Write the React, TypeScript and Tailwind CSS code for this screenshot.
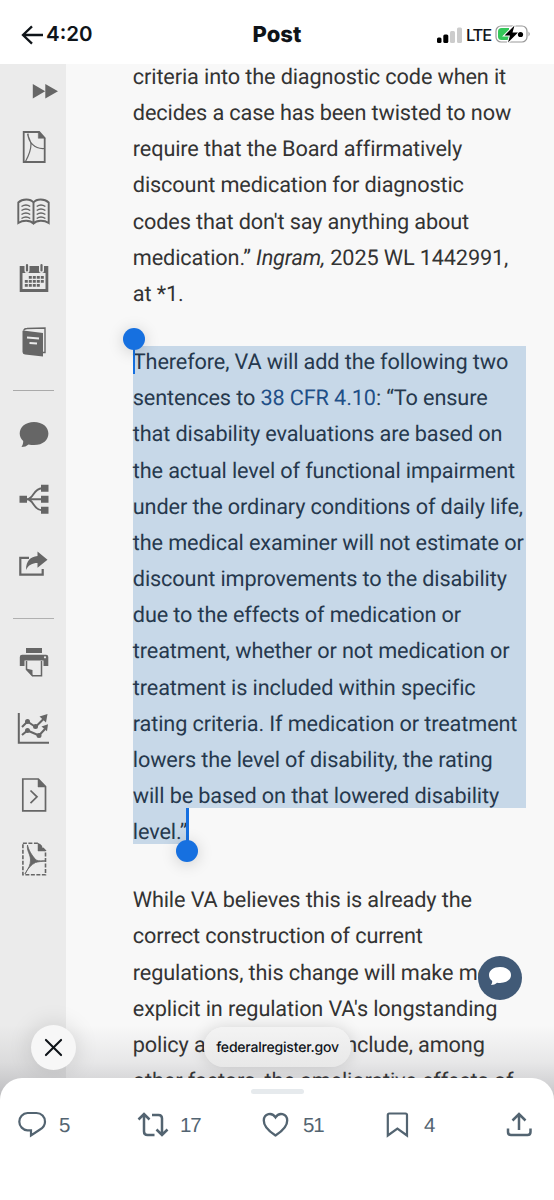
import type { ReactNode } from "react";

const introLines: ReactNode[] = [
  "criteria into the diagnostic code when it",
  "decides a case has been twisted to now",
  "require that the Board affirmatively",
  "discount medication for diagnostic",
  "codes that don't say anything about",
  <>
    medication.” <em>Ingram,</em> 2025 WL 1442991,
  </>,
  "at *1.",
];

const selectedLines: ReactNode[] = [
  "Therefore, VA will add the following two",
  <>
    sentences to <a className="text-[#1f4f87]">38 CFR 4.10</a>: “To ensure
  </>,
  "that disability evaluations are based on",
  "the actual level of functional impairment",
  "under the ordinary conditions of daily life,",
  "the medical examiner will not estimate or",
  "discount improvements to the disability",
  "due to the effects of medication or",
  "treatment, whether or not medication or",
  "treatment is included within specific",
  "rating criteria. If medication or treatment",
  "lowers the level of disability, the rating",
  "will be based on that lowered disability",
  "level.”",
];

const closingLines: ReactNode[] = [
  "While VA believes this is already the",
  "correct construction of current",
  "regulations, this change will make more",
  "explicit in regulation VA's longstanding",
  <>
    policy a<span className="inline-block w-[139.5px]" />
    nclude, among
  </>,
  "other factors, the ameliorative effects of",
];

function Lines({ lines }: { lines: ReactNode[] }) {
  return (
    <>
      {lines.map((line, i) => (
        <span key={i} className="block whitespace-nowrap">
          {line}
        </span>
      ))}
    </>
  );
}

function ToolIcon({ className, children }: { className: string; children: ReactNode }) {
  return (
    <svg
      viewBox="0 0 40 40"
      className={`ml-3.5 block h-10 w-10 shrink-0 overflow-visible fill-none stroke-[#666] ${className}`}
    >
      {children}
    </svg>
  );
}

function Sidebar() {
  return (
    <aside className="flex w-[65.5px] shrink-0 flex-col bg-[#ebebeb]">
      <ToolIcon className="mt-[7px]">
        <path d="M18.8 13v14.5l12.4-7.2zM31.3 13v14.5L44 20.3z" fill="#666" stroke="none" />
      </ToolIcon>
      <ToolIcon className="mt-4">
        <path d="M9.7 5h15.500l5.500 6v24H9.700z" strokeWidth="1.800" />
        <path d="M24.300 4.500v6.800h6.800z" fill="#666" strokeWidth=".5" />
        <path d="M14 6.500c0 8 6.500 16 16.500 15M13.500 7c1 4 3 6.500 3.500 10 0 6-2.500 12-5.500 17.500" strokeWidth="1.200" />
      </ToolIcon>
      <ToolIcon className="mt-[25px]">
        <path d="M19.500 10.500c-3-4-11-4-15.200 0v20.500c4.500-3 12-3 15.200.5 3.200-3.500 10.700-3.500 15.200-.5V10.500c-4.200-4-12.200-4-15.200 0zV31" strokeWidth="1.900" />
        <path d="M7.500 14.500q4.500-3 8.700 0M7.500 18.500q4.500-3 8.700 0M7.500 22.500q4.500-3 8.700 0M7.500 26.500q4.500-3 8.700 0M22.700 14.500q4.200-3 8.700 0M22.700 18.500q4.200-3 8.700 0M22.700 22.500q4.200-3 8.700 0M22.700 26.500q4.200-3 8.700 0" strokeWidth="1.500" />
      </ToolIcon>
      <ToolIcon className="mt-[26px]">
        <path d="M5.700 8h28.600v26H5.700zM8.500 15v16h23V15z" fill="#666" fillRule="evenodd" stroke="none" />
        <path d="M13 7v5.500M27.500 7v5.500" stroke="#ebebeb" strokeWidth="5" strokeLinecap="round" />
        <path d="M13 7v5.500M27.500 7v5.500" strokeWidth="2.200" strokeLinecap="round" />
        <path d="M14.800 19.300h15.500M10.800 23.300h19.500M10.800 27.300h15.500" strokeWidth="2.800" strokeDasharray="3 1" />
      </ToolIcon>
      <ToolIcon className="mt-6">
        <path d="M9 8.500 29 11v23.500L11 32.500q-2.500-.3-2.500-2.500V9z" fill="#666" stroke="none" />
        <path d="M9.500 8.500q1-2 3.500-2l18-.5v24.500h-2" strokeWidth="1.400" />
        <path d="M13 15.500l12 1M15.500 21l7.500.6" stroke="#ebebeb" strokeWidth="2" />
      </ToolIcon>
      <hr className="ml-[13px] mt-7 h-px w-[41px] shrink-0 border-0 bg-[#aaa]" />
      <ToolIcon className="mt-[23px]">
        <path d="M20 8C11.500 8 5.700 13 5.700 19.500c0 3.300 1.500 5.700 3.500 7.500 0 2.500-.5 4-1.700 6 3 0 5-.8 7-2.500C27 33 34.400 27 34.400 19.500 34.400 13 28.500 8 20 8z" fill="#666" stroke="none" />
      </ToolIcon>
      <ToolIcon className="mt-[25px]">
        <path d="M5.500 16.800h7.500v7H5.500zM27 5.700h7.500v7H27zM27 16.800h7.500v7H27zM27 27.700h7.500v7H27z" fill="#666" stroke="none" />
        <path d="M12 20.300h16M13 20.300C20 20 19 9.500 28 9.300M13 20.300C20 20.500 19 31 28 31.300" strokeWidth="1.900" />
      </ToolIcon>
      <ToolIcon className="mt-[25px]">
        <path d="M15 13.800H6.300v16.800H28.700V25" strokeWidth="2.200" />
        <path d="M12 26c0-9 4.500-13.500 11.500-14V7.500l10 8.300-10 8V19C18 19 14.500 21 12 26z" fill="#666" stroke="none" />
      </ToolIcon>
      <hr className="ml-[13px] mt-[34px] h-px w-[41px] shrink-0 border-0 bg-[#b0b0b0]" />
      <ToolIcon className="mt-[23px]">
        <path d="M12 6h16v5H12zM5.800 24V15q0-2.300 2.300-2.300h24q2.200 0 2.200 2.300v9h-4.800v-5.500H10.500V24z" fill="#666" stroke="none" />
        <circle cx="31" cy="15.300" r="1.100" fill="#ebebeb" stroke="none" />
        <path d="M12.500 19v8.500l6 6.300h9V19" strokeWidth="1.500" />
        <path d="M12 26.500 18.500 28v6.500z" fill="#666" stroke="none" />
      </ToolIcon>
      <ToolIcon className="mt-[26px]">
        <path d="M4.800 5v29.700H35" strokeWidth="2" />
        <path d="M8 19l5.500-5.500 8 5.500 8-8M8 27l5.500-4.500 11.500 5 6-6.500" strokeWidth="2.100" />
        <path d="M25.500 8.500 33.500 6l-1.500 8.500zM27.500 18.500l6.500-2.300-1 7z" fill="#666" stroke="none" />
        <g fill="#666" stroke="none">
          <circle cx="13.500" cy="13.500" r="2.500" />
          <circle cx="21.500" cy="18.500" r="2.500" />
          <circle cx="13.500" cy="22.500" r="2.500" />
          <circle cx="25" cy="27.500" r="2.500" />
        </g>
      </ToolIcon>
      <ToolIcon className="mt-[27px]">
        <path d="M8.800 4h15.500l7.200 7.500v24.300H8.800z" strokeWidth="1.700" />
        <path d="M24 4v8h7.500z" fill="#666" strokeWidth=".5" />
        <path d="M16.500 15.500l6.500 6.300-6.500 6.300" strokeWidth="1.700" />
      </ToolIcon>
      <ToolIcon className="mt-6">
        <path d="M8.900 4.300h15.600l7 7.500v24H8.900z" strokeWidth="1.600" strokeDasharray="4 1.500" />
        <path d="M24 4v8h7.500z" fill="#666" strokeWidth=".5" />
        <path d="M13.500 6c1 4.500 3.500 9.500 8.500 15 3.500 1.500 6.500.5 9.500 1-3.500.5-7 .5-10 1.500-4 2-8 6-10.500 11.500 3.500-6 5.500-9 5.500-14C16.500 15 12.500 12 13.500 6z" fill="#666" stroke="#666" strokeWidth=".8" />
      </ToolIcon>
    </aside>
  );
}

function StatusBar() {
  return (
    <header className="flex h-16 shrink-0 items-center bg-white pt-[5px] text-[#0f1419]">
      <div className="flex w-[200px] items-center pl-5">
        <svg viewBox="0 0 24 22" className="mt-px h-[22px] w-6 fill-none stroke-[#0f1419] stroke-[2.3]">
          <path d="M12 2.300 3 11l9 8.700M3 11h20" />
        </svg>
        <span className="ml-0.5 font-[Inter,sans-serif] text-[20.5px] font-semibold">4:20</span>
      </div>
      <h1 className="w-[154px] pt-px text-center font-[Inter,sans-serif] text-[22px] font-extrabold">Post</h1>
      <div className="flex flex-1 items-center pl-[83px]">
        <svg viewBox="0 0 26 16" className="h-4 w-[26px]">
          <rect x="0" y="10.500" width="4.500" height="5.500" rx="1.500" />
          <rect x="6.300" y="7.500" width="5" height="8.500" rx="1.500" />
          <rect x="13" y="4" width="5" height="12" rx="1.500" fill="#ccc" />
          <rect x="20" y="0.500" width="5" height="15.500" rx="1.500" fill="#ccc" />
        </svg>
        <span className="ml-[3px] w-[25px] font-[Inter,sans-serif] text-[16.500px] font-medium leading-5 tracking-[-1.2px]">
          LTE
        </span>
        <svg viewBox="0 0 36 20" className="-mt-0.5 ml-1 h-5 w-9 shrink-0">
          <rect x="1" y="2" width="31" height="16" rx="5" fill="#fff" stroke="#999" strokeWidth="1.200" />
          <path d="M6.500 4H14v12H6.500Q3 16 3 12.500v-5Q3 4 6.500 4z" fill="#34c759" />
          <path d="M33.500 7.500q2.500 2.500 0 5z" fill="#999" />
          <path d="M19.500 1.500 9.500 11.500h5.500l-2 7 10-10h-5.500z" stroke="#fff" strokeWidth="2" paintOrder="stroke" />
          <circle cx="25.500" cy="10.500" r="2.600" />
        </svg>
      </div>
    </header>
  );
}

function Article() {
  return (
    <main className="flex-1 bg-[#f8f8f8] pl-[67.3px] font-[Roboto,sans-serif] text-[21.7px] leading-[36.15px] tracking-[-0.13px] text-[#333]">
      <p className="-mt-[4px]">
        <Lines lines={introLines} />
      </p>
      <p className="relative mt-8 text-[#26384d]">
        <span className="absolute left-0 top-[1px] h-[461.500px] w-[393px] bg-[#c7d8e8]" />
        <span className="absolute left-0 top-[462.500px] h-[36px] w-[55px] bg-[#c7d8e8]" />
        <span className="relative block">
          <Lines lines={selectedLines} />
        </span>
        <span className="absolute left-0 top-0 h-[28.5px] w-[2.500px] bg-[#1670e0]" />
        <span className="absolute -left-[10px] -top-[17.5px] h-[22px] w-[22px] rounded-full bg-[#1670e0] shadow-[0_2px_16px_rgba(0,0,0,0.18)]" />
        <span className="absolute left-[53.500px] top-[463px] h-[35px] w-[2.500px] bg-[#1670e0]" />
        <span className="absolute left-[43.500px] top-[495px] h-[22px] w-[22px] rounded-full bg-[#1670e0] shadow-[0_2px_16px_rgba(0,0,0,0.18)]" />
      </p>
      <p className="mt-8">
        <Lines lines={closingLines} />
      </p>
    </main>
  );
}

function ActionBar() {
  return (
    <footer className="relative z-10 -mt-[22px] h-[122px] shrink-0 rounded-t-[22px] bg-white pt-[11px] text-[#536471]">
      <div className="mx-auto h-[5px] w-[53px] rounded-full bg-[#e6eaed]" />
      <div className="mt-[15px] flex h-8 items-center pl-[17px] font-['Liberation_Sans',sans-serif] text-[20.5px]">
        <div className="flex w-[119px] items-center">
          <svg viewBox="0 0 30 30" className="h-[30px] w-[30px] fill-none stroke-[#536471] stroke-[2.200]">
            <path d="M10.500 3h9a8.500 8.500 0 0 1 8.500 8.700c0 3.300-2 6-5 7.800l-9 6v-5.200h-3.500A8.700 8.700 0 0 1 2.300 11.700 8.500 8.500 0 0 1 10.500 3z" />
          </svg>
          <span className="ml-3 mt-0.5">5</span>
        </div>
        <div className="flex w-[125px] items-center">
          <svg viewBox="0 0 34 30" className="h-[30px] w-[34px] fill-none stroke-[#536471] stroke-[2.500]">
            <path d="M2.500 9.500 8 4l5.500 5.500M8 4.500v17q0 3.500 3.500 3.500h7M16 5h6.500Q26 5 26 8.500v16M20.500 19.500 26 25l5.500-5.500" />
          </svg>
          <span className="ml-2.5 mt-0.5 tracking-[-1.2px]">17</span>
        </div>
        <div className="flex w-[123px] items-center">
          <svg viewBox="0 0 30 30" className="h-[30px] w-[30px] fill-none stroke-[#536471] stroke-[2.300]">
            <path d="M14.500 7.300C11 2 3 3.300 2.800 10.500 2.600 16 7.500 21 14.500 25.500c7-4.500 11.900-9.500 11.700-15C26 3.300 18 2 14.500 7.300z" />
          </svg>
          <span className="ml-3 mt-0.5 tracking-[-1.200px]">51</span>
        </div>
        <div className="flex w-[121px] items-center">
          <svg viewBox="0 0 26 30" className="h-[30px] w-[26px] fill-none stroke-[#536471] stroke-[2.200]">
            <path d="M3.800 25.500V5Q3.800 3.500 5.300 3.500h16.200Q23 3.500 23 5v20.500l-9.600-7z" />
          </svg>
          <span className="ml-3.5 mt-0.5">4</span>
        </div>
        <svg viewBox="0 0 28 30" className="h-[30px] w-7 fill-none stroke-[#536471] stroke-[2.500]">
          <path d="M14 20V4.500M7.500 10.500 14 4 20.500 10.500M3 18.500V22q0 3 3 3h16.500q3 0 3-3v-3.500" />
        </svg>
      </div>
    </footer>
  );
}

export default function App() {
  return (
    <div className="relative flex h-[1200px] w-[554px] flex-col overflow-hidden bg-white [text-rendering:geometricPrecision]">
      <StatusBar />
      <div className="relative flex h-[1036px] shrink-0 overflow-hidden">
        <Sidebar />
        <Article />
        <div className="absolute inset-x-0 bottom-0 h-[75px] bg-linear-to-b from-transparent via-[#3c3c46]/9 to-[#3c3c46]/28" />
        <button className="absolute left-[31px] top-[960.500px] flex h-[45px] w-[45px] items-center justify-center rounded-full bg-[#f7f7f7] shadow-[0_0_24px_rgba(0,0,0,0.14)]">
          <svg viewBox="0 0 18 18" className="h-[17px] w-[17px] overflow-visible stroke-[#0f1419] stroke-[2.200]">
            <path d="M1 1l16 16M17 1 1 17" strokeLinecap="round" />
          </svg>
        </button>
        <div className="absolute left-[204px] top-[963px] flex h-10 w-[147px] items-center justify-center rounded-full bg-linear-to-b from-[#f3f3f3] to-[#e8e8e8] font-[Inter,sans-serif] text-[14px] font-medium tracking-[-0.2px] text-[#0f1419] shadow-[0_0_16px_rgba(0,0,0,0.14)]">
          federalregister.gov
        </div>
        <button className="absolute left-[477.500px] top-[892px] flex h-11 w-11 items-center justify-center rounded-full bg-[#415a77]">
          <svg viewBox="0 0 24 22" className="-mt-1 h-[22px] w-6 fill-white">
            <path d="M12 2C5.500 2 1 5.500 1 10c0 2.500 1.200 4.500 3.200 6 0 1.700-.3 2.800-1.200 4 2.500 0 4.300-.6 6-2.200C17 19 23 15.500 23 10c0-4.500-4.500-8-11-8z" />
          </svg>
        </button>
      </div>
      <ActionBar />
    </div>
  );
}
